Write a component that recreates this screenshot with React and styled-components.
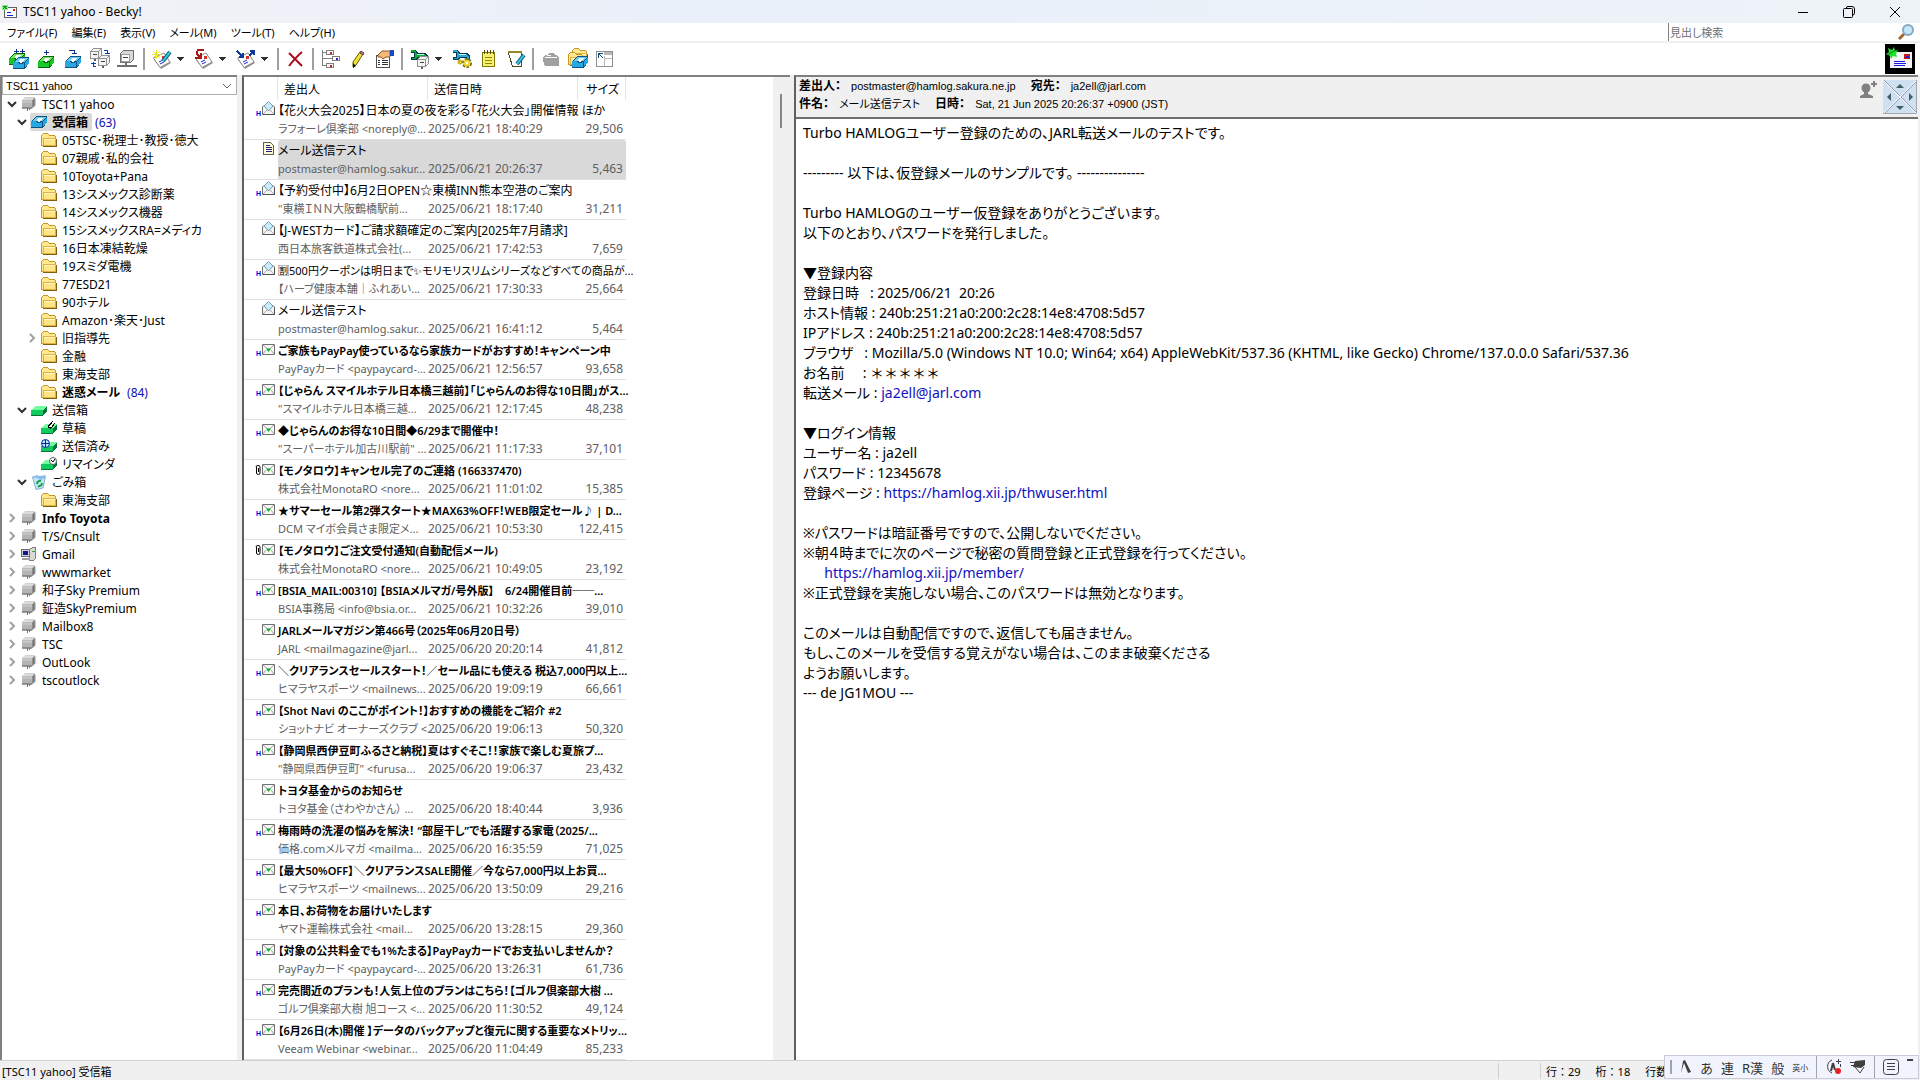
import { useState } from "react"
import styled, { createGlobalStyle } from "styled-components"

const menus = ["ファイル(F)", "編集(E)", "表示(V)", "メール(M)", "ツール(T)", "ヘルプ(H)"]

const folders = [
    { name: "TSC11 yahoo", level: 0, icon: "server", open: true },
    { name: "受信箱", level: 1, icon: "inbox", open: true, count: 63, bold: true, selected: true },
    { name: "05TSC･税理士･教授･徳大", level: 2, icon: "folder" },
    { name: "07親戚･私的会社", level: 2, icon: "folder" },
    { name: "10Toyota+Pana", level: 2, icon: "folder" },
    { name: "13シスメックス診断薬", level: 2, icon: "folder" },
    { name: "14シスメックス機器", level: 2, icon: "folder" },
    { name: "15シスメックスRA=メディカ", level: 2, icon: "folder" },
    { name: "16日本凍結乾燥", level: 2, icon: "folder" },
    { name: "19スミダ電機", level: 2, icon: "folder" },
    { name: "77ESD21", level: 2, icon: "folder" },
    { name: "90ホテル", level: 2, icon: "folder" },
    { name: "Amazon･楽天･Just", level: 2, icon: "folder" },
    { name: "旧指導先", level: 2, icon: "folder", open: false },
    { name: "金融", level: 2, icon: "folder" },
    { name: "東海支部", level: 2, icon: "folder" },
    { name: "迷惑メール", level: 2, icon: "folder", count: 84, bold: true },
    { name: "送信箱", level: 1, icon: "outbox", open: true },
    { name: "草稿", level: 2, icon: "draft" },
    { name: "送信済み", level: 2, icon: "sent" },
    { name: "リマインダ", level: 2, icon: "reminder" },
    { name: "ごみ箱", level: 1, icon: "trash", open: true },
    { name: "東海支部", level: 2, icon: "folder" },
    { name: "Info Toyota", level: 0, icon: "server", open: false, bold: true },
    { name: "T/S/Cnsult", level: 0, icon: "server", open: false },
    { name: "Gmail", level: 0, icon: "computer", open: false },
    { name: "wwwmarket", level: 0, icon: "server", open: false },
    { name: "和子Sky Premium", level: 0, icon: "server", open: false },
    { name: "鉦造SkyPremium", level: 0, icon: "server", open: false },
    { name: "Mailbox8", level: 0, icon: "server", open: false },
    { name: "TSC", level: 0, icon: "server", open: false },
    { name: "OutLook", level: 0, icon: "server", open: false },
    { name: "tscoutlock", level: 0, icon: "server", open: false },
]

// mark: H = html mail, A = attachment
const mails = [
    { subject: "【花火大会2025】日本の夏の夜を彩る「花火大会」開催情報 ほか", from: "ラフォーレ倶楽部 <noreply@...", date: "2025/06/21 18:40:29", size: "29,506", icon: "read", mark: "H" },
    { subject: "メール送信テスト", from: "postmaster@hamlog.sakur...", date: "2025/06/21 20:26:37", size: "5,463", icon: "page" },
    { subject: "【予約受付中】6月2日OPEN☆東横INN熊本空港のご案内", from: "\"東横ＩＮＮ大阪鶴橋駅前...", date: "2025/06/21 18:17:40", size: "31,211", icon: "read", mark: "H" },
    { subject: "【J-WESTカード】ご請求額確定のご案内[2025年7月請求]", from: "西日本旅客鉄道株式会社(...", date: "2025/06/21 17:42:53", size: "7,659", icon: "read" },
    { subject: "🈹500円クーポンは明日まで✨\uFE0Eモリモリスリムシリーズなどすべての商品が...", from: "【ハーブ健康本舗｜ふれあい...", date: "2025/06/21 17:30:33", size: "25,664", icon: "read", mark: "H", long: true },
    { subject: "メール送信テスト", from: "postmaster@hamlog.sakur...", date: "2025/06/21 16:41:12", size: "5,464", icon: "read" },
    { subject: "ご家族もPayPay使っているなら家族カードがおすすめ！キャンペーン中", from: "PayPayカード <paypaycard-...", date: "2025/06/21 12:56:57", size: "93,658", icon: "unread", mark: "H" },
    { subject: "【じゃらん スマイルホテル日本橋三越前】「じゃらんのお得な10日間」がス...", from: "\"スマイルホテル日本橋三越...", date: "2025/06/21 12:17:45", size: "48,238", icon: "unread", mark: "H" },
    { subject: "◆じゃらんのお得な10日間◆6/29まで開催中！", from: "\"スーパーホテル加古川駅前\" ...", date: "2025/06/21 11:17:33", size: "37,101", icon: "unread", mark: "H" },
    { subject: "【モノタロウ】キャンセル完了のご連絡 (166337470)", from: "株式会社MonotaRO <nore...", date: "2025/06/21 11:01:02", size: "15,385", icon: "unread", mark: "A" },
    { subject: "★サマーセール第2弾スタート★MAX63%OFF！WEB限定セール♪ | D...", from: "DCM マイボ会員さま限定メ...", date: "2025/06/21 10:53:30", size: "122,415", icon: "unread", mark: "H" },
    { subject: "【モノタロウ】ご注文受付通知(自動配信メール)", from: "株式会社MonotaRO <nore...", date: "2025/06/21 10:49:05", size: "23,192", icon: "unread", mark: "A" },
    { subject: "[BSIA_MAIL:00310] 【BSIAメルマガ/号外版】　6/24開催目前──...", from: "BSIA事務局 <info@bsia.or...", date: "2025/06/21 10:32:26", size: "39,010", icon: "unread", mark: "H" },
    { subject: "JARLメールマガジン第466号（2025年06月20日号）", from: "JARL <mailmagazine@jarl...", date: "2025/06/20 20:20:14", size: "41,812", icon: "unread" },
    { subject: "＼クリアランスセールスタート！／セール品にも使える 税込7,000円以上...", from: "ヒマラヤスポーツ <mailnews...", date: "2025/06/20 19:09:19", size: "66,661", icon: "unread", mark: "H" },
    { subject: "【Shot Navi のここがポイント！】おすすめの機能をご紹介 #2", from: "ショットナビ オーナーズクラブ <...", date: "2025/06/20 19:06:13", size: "50,320", icon: "unread", mark: "H" },
    { subject: "【静岡県西伊豆町ふるさと納税】夏はすぐそこ！！家族で楽しむ夏旅プ...", from: "\"静岡県西伊豆町\" <furusa...", date: "2025/06/20 19:06:37", size: "23,432", icon: "unread", mark: "H" },
    { subject: "トヨタ基金からのお知らせ", from: "トヨタ基金（さわやかさん） ...", date: "2025/06/20 18:40:44", size: "3,936", icon: "unread" },
    { subject: "梅雨時の洗濯の悩みを解決！ “部屋干し”でも活躍する家電（2025/...", from: "価格.comメルマガ <mailma...", date: "2025/06/20 16:35:59", size: "71,025", icon: "unread", mark: "H" },
    { subject: "【最大50%OFF】＼クリアランスSALE開催／今なら7,000円以上お買...", from: "ヒマラヤスポーツ <mailnews...", date: "2025/06/20 13:50:09", size: "29,216", icon: "unread", mark: "H" },
    { subject: "本日、お荷物をお届けいたします", from: "ヤマト運輸株式会社 <mail...", date: "2025/06/20 13:28:15", size: "29,360", icon: "unread", mark: "H" },
    { subject: "【対象の公共料金でも1%たまる】PayPayカードでお支払いしませんか？", from: "PayPayカード <paypaycard-...", date: "2025/06/20 13:26:31", size: "61,736", icon: "unread", mark: "H" },
    { subject: "完売間近のプランも！人気上位のプランはこちら！【ゴルフ倶楽部大樹 ...", from: "ゴルフ倶楽部大樹 旭コース <...", date: "2025/06/20 11:30:52", size: "49,124", icon: "unread", mark: "H" },
    { subject: "【6月26日(木)開催 】データのバックアップと復元に関する重要なメトリッ...", from: "Veeam Webinar <webinar...", date: "2025/06/20 11:04:49", size: "85,233", icon: "unread", mark: "H" },
]

const Svg = ({ w = 20, h = w, smooth, children }) => (
    <svg width={w} height={h} viewBox={`0 0 ${w} ${h}`} shapeRendering={smooth ? "auto" : "crispEdges"} aria-hidden="true">
        {children}
    </svg>
)

const Tray = ({ x = 0, y = 0, color, light, dark }) => (
    <g transform={`translate(${x} ${y})`}>
        <path d="M0 6L5 1H16V7L12 13H0Z" fill={dark} />
        <path d="M1 6L5 2H15L11 6Z" fill={light} />
        <path d="M5 5L7 3H12L10 5L8 7H7Z" fill="#f4fbff" />
        <path d="M0 6H4L6 8H9L11 6V12H0Z" fill={color} />
        <path d="M12 6L16 2V7L12 11Z" fill={color} />
    </g>
)
const BlueTray = (p) => <Tray color="#28a8e0" light="#68ccf4" dark="#0f5480" {...p} />
const GreenTray = (p) => <Tray color="#18c828" light="#70e858" dark="#0c6018" {...p} />

const Server = ({ x = 0, y = 0, fill = "#f4f4f4" }) => (
    <g transform={`translate(${x} ${y})`}>
        <path d="M.5 3.5L3.5 .5H11.5V7.5L8.5 10.5H.5Z" fill={fill} stroke="#909090" />
        <path d="M.5 3.5H8.5V10.5M8.5 3.5L11.5 .5" stroke="#909090" fill="none" />
        <path d="M3 6.5H7" stroke="#404040" />
        <path d="M4 11H6V13H4Z" fill="#606060" />
    </g>
)

const Sheet = () => (
    <g shapeRendering="auto">
        <path d="M2 11L13 5L19 14L9 20Z" fill="#909090" />
        <path d="M1.500 9L12 4L18 13L8 18.500Z" fill="#fff" stroke="#909090" />
        <path d="M7 13L11 11M8 15L12 13" stroke="#2020e0" />
        <path d="M10 7H13V10H10Z" fill="#e03020" />
    </g>
)

const Folder = ({ x = 0, y = 0 }) => (
    <g transform={`translate(${x} ${y})`}>
        <path d="M.5 12.500V2.500L2.500 .5H6.500L8.500 2.500H13.500L14.500 4V12.500Z" fill="#ffe890" stroke="#c89828" />
        <path d="M2.500 12.500V5.500H14.500V12.500Z" fill="#ffe488" stroke="#e0b040" />
        <path d="M3 6.500H14" stroke="#fff8c8" />
        <path d="M2 13.500H15.500V6" stroke="#806010" fill="none" />
    </g>
)

const Wrench = ({ color }) => (
    <g>
        <path d="M1 1H6L8 4H15L18 7V11H14V9H8L6 11H1V8H4V4H1Z" fill="#083850" />
        <path d="M1 1H5L7 5H14L17 8V10H15V8H7L5 10H2V9H5V3H1Z" fill={color} />
        <path d="M7 5.500H14" stroke="#d0f8ff" />
    </g>
)

const GreenBox = ({ children }) => (
    <Svg w={16} h={14}>
        <path d="M0 7L4 3H16V8L12 13H0Z" fill="#0c7038" />
        <path d="M0 7L4 3H16L12 7Z" fill="#70ff9c" />
        <path d="M0 7H12V12H0Z" fill="#10cc60" />
        {children}
    </Svg>
)

const toolIcons = {
    sendReceive: <Svg w={22}><GreenTray x={1} y={4} /><BlueTray x={5} y={8} /><path d="M8.500 1V5M6 3.500H11M14.500 1V5M12 3.500H17" stroke="#103090" /></Svg>,
    send: <Svg><GreenTray x={2} y={6} /><path d="M10.500 1V6M8 3.500H13" stroke="#103090" /></Svg>,
    receive: <Svg><BlueTray x={2} y={6} /><path d="M6 1.500H11.500V5M9 4.500H14" stroke="#103090" fill="none" /></Svg>,
    sync: <Svg w={22}><Server x={1} y={0} /><Server x={9} y={7} /><path d="M15 2.500H18.500V6M16 5.500H21M7 18.500H4.500V14M2 15.500H7" stroke="#0040b0" fill="none" /></Svg>,
    remote: <Svg><path d="M3.500 4.500L6.500 1.500H16.500V10.500L13.500 13.500H3.500Z" fill="#d8d8d8" stroke="#707070" /><path d="M4.500 5.500H12.500V12.500H4.500Z" fill="#fff" stroke="#a0a0a0" /><path d="M6 8.500H11" stroke="#404040" /><path d="M8 14H10V17H8ZM0 16H20V18H0Z" fill="#707070" /></Svg>,
    compose: <Svg><Sheet /><path d="M11 12L18 3" stroke="#186880" strokeWidth="4" shapeRendering="auto" /><path d="M11 12L18 3" stroke="#30c8e0" strokeWidth="2" shapeRendering="auto" /><path d="M1 2L8 9M8 2L1 9M4.500 1V10M0 5.500H9" stroke="#f0e830" /></Svg>,
    reply: <Svg><Sheet /><path d="M10 1H4L3 3V5L6 8M1 8.500H7V4" stroke="#a81818" strokeWidth="2" fill="none" /></Svg>,
    forward: <Svg><Sheet /><path d="M1 2L7 8M7 4V8H3" stroke="#1038a0" strokeWidth="2" fill="none" /><path d="M13 7L18 2M14 2H18V6" stroke="#1038a0" strokeWidth="2" fill="none" /></Svg>,
    remove: <Svg w={18} smooth><path d="M2 3L15 16M15 2C10 6 6 11 2 16" stroke="#b00818" strokeWidth="2" fill="none" /></Svg>,
    thread: <Svg><path d="M1.500 1V16.500H5M1 3.500H5M1 9.500H11" stroke="#808080" fill="none" /><path d="M5.500 1.500H12.500V5.500H5.500ZM11.500 7.500H18.500V11.500H11.500ZM5.500 14.500H12.500V18.500H5.500Z" fill="#fff" stroke="#808080" /><path d="M9 3H11V5H9Z" fill="#d01818" /><path d="M15 9H17V11H15Z" fill="#2020e0" /><path d="M9 16H11V18H9Z" fill="#d01818" /></Svg>,
    edit: <Svg w={14} h={20} smooth><path d="M9 3L12 5L5 16L2 18V13Z" fill="#f0e438" stroke="#605800" /><path d="M10 2L13 4L12 6L9 4Z" fill="#d07080" stroke="#604040" /><path d="M2 14V19L5 17Z" fill="#101010" /></Svg>,
    property: <Svg><path d="M1.500 6.500H14.500V18.500H1.500Z" fill="#fff" stroke="#505050" /><path d="M3 11.500H5M7 11.500H13M3 13.500H5M7 13.500H13M3 15.500H5M7 15.500H13" stroke="#303030" /><path d="M3 6L7 2H15V8H11L8 10L6 8H3Z" fill="#f4b878" stroke="#905820" shapeRendering="auto" /><path d="M15 1H19V7H15Z" fill="#1848c8" /></Svg>,
    mailboxSetup: <Svg><Wrench color="#10b030" /><Server x={7} y={7} /></Svg>,
    setup: <Svg><Wrench color="#28a8d8" /><g shapeRendering="auto"><circle cx="15" cy="14" r="3" fill="#fff" stroke="#706000" strokeWidth="4" strokeDasharray="2 1" /><circle cx="15" cy="14" r="2.500" fill="#fff" stroke="#e8d020" strokeWidth="2" /><circle cx="8" cy="13" r="1.500" fill="#fff" stroke="#c8b010" strokeWidth="2" /></g></Svg>,
    memo: <Svg w={16} h={20}><path d="M1.500 3.500H13.500V17.500H1.500Z" fill="#f8f070" stroke="#807808" /><path d="M4 8.500H11M4 11.500H11M4 14.500H11" stroke="#908800" /><path d="M3.500 1V5M6.500 1V5M9.500 1V5M12.500 1V5" stroke="#505008" /></Svg>,
    note: <Svg><path d="M2.500 3.500H15.500V17.500H6.500L2.500 4" fill="#fff" stroke="#484818" /><path d="M2 2H16V4H2Z" fill="#908828" /><path d="M18 6L11 15" stroke="#186080" strokeWidth="4" shapeRendering="auto" /><path d="M18 6L11 15" stroke="#38c8e8" strokeWidth="2" shapeRendering="auto" /></Svg>,
    openFolder: <Svg w={18}><path d="M1 8L3 5H5L7 3H11L13 5H15L17 8V15L16 16H3L1 10Z" fill="#a0a0a0" /><path d="M3 7.500H15M5 5.500H9" stroke="#fff" /></Svg>,
    folders: <Svg w={22}><Folder x={5} y={0} /><Folder x={1} y={4} /><BlueTray x={5} y={7} /></Svg>,
    layout: <Svg><path d="M1.500 2.500H17.500V17.500H1.500Z" fill="#fff" stroke="#909090" /><path d="M9 3H17V6H9ZM9 7H10V17H9ZM10 9H17V10H10Z" fill="#b8b8b8" /><path d="M3.500 4V9M3 4.500H8M4 5L8 9" stroke="#104880" fill="none" /></Svg>,
}

const treeIcons = {
    server: <Svg w={16} smooth><path d="M1 4.500L4 1.500H13.500L14.500 3V9.500L11 12.500H1Z" fill="#909090" /><path d="M1 4.500L4 1.500H13.500L11 4.500Z" fill="#dcdcdc" /><path d="M1 4.500H11V11.500H1Z" fill="#b4b4b4" /><path d="M1 4.500H11V7H1Z" fill="#c4c4c4" /><path d="M12.500 4V10" stroke="#707070" /><path d="M1 12H11" stroke="#707070" /><path d="M6.500 12V15M8.500 12V14" stroke="#707070" /></Svg>,
    computer: <Svg w={16}><path d="M8.500 3.500L11.500 1.500H14.500V12.500L12.500 14.500H8.500Z" fill="#d8d8d8" stroke="#808080" /><path d="M.5 3.500H8.500V10.500H.5Z" fill="#d0d0d0" stroke="#707070" /><path d="M2 5H7V9H2Z" fill="#101890" /><path d="M11 5H14V6H11Z" fill="#40a040" /><path d="M1 12H9V14H1Z" fill="#a0a0a0" /></Svg>,
    inbox: <Svg w={16} h={14}><BlueTray /></Svg>,
    outbox: <GreenBox />,
    draft: <GreenBox><path d="M8 7L13 1" stroke="#000" strokeWidth="4" /><path d="M9 6L13 1" stroke="#fff" strokeWidth="2" /></GreenBox>,
    sent: <GreenBox><g shapeRendering="auto"><circle cx="4.500" cy="4.500" r="4" fill="#b8ecff" stroke="#1020a0" /><path d="M1 4.500H8M4.500 1V8" stroke="#1020a0" /></g></GreenBox>,
    reminder: <GreenBox><g shapeRendering="auto"><circle cx="12" cy="4" r="3.500" fill="#fff" stroke="#606060" /><path d="M10 3L12 5L14 2" stroke="#000" fill="none" /></g></GreenBox>,
    trash: <Svg w={16} smooth><path d="M1.500 3L14.500 2L12 14L5 15.500Z" fill="#c4e4f8" stroke="#80b0d0" /><path d="M1 3L6 1L10 3L14 1V4L10 6L6 4Z" fill="#88c0ec" /><path d="M6 10A3 3 0 0 1 10 7M11 9A3 3 0 0 1 7 12" stroke="#18a040" strokeWidth="2" fill="none" /></Svg>,
    folder: <Svg w={16} h={14}><Folder /></Svg>,
}

const mailIcons = {
    read: <Svg w={13} h={15} smooth><path d="M.5 6L2 4.500H11L12.500 6V13.500H.5Z" fill="#f4f4f4" stroke="#707070" /><path d="M2 5L6.500 .5L11 5L6.500 10Z" fill="#c8ecff" stroke="#7898a8" /><path d="M1 13L5 9M12 13L8 9" stroke="#b0b0b0" /><path d="M1 13.500H12.500V7" fill="none" stroke="#505050" /></Svg>,
    unread: <Svg w={13} h={12} smooth><path d="M.5 .5H12.500V10.500H.5Z" fill="#f8f8f8" stroke="#707070" /><path d="M1 1L6.500 6L12 1M1 10L4 6M12 10L9 6" stroke="#a0a0a0" fill="none" /><path d="M4 4.500H9L6.500 8Z" fill="#10a820" /></Svg>,
    page: <Svg w={13} h={14}><path d="M1.500 .5H8.500L11.500 3.500V12.500H1.500Z" fill="#fffbd0" stroke="#606060" /><path d="M4 3.500H8M4 5.500H10M4 7.500H10M4 9.500H10" stroke="#202080" /></Svg>,
}

const Chevron = ({ open }) => (
    <Svg w={10} smooth>
        {open ? <path d="M1 3L5 7L9 3" fill="none" stroke="#303030" strokeWidth="2" /> : <path d="M3 1L7 5L3 9" fill="none" stroke="#a0a0a0" strokeWidth="2" />}
    </Svg>
)

const Tool = ({ icon, label, menu }) => (
    <ToolButton $menu={menu} title={label} aria-label={label}>
        <IconBox>{toolIcons[icon]}</IconBox>
        {menu && <Svg w={8} h={5}><path d="M0 0H8L4 4Z" fill="#303030" /></Svg>}
    </ToolButton>
)

const Mail = ({ mail, selected, onSelect }) => (
    <tbody onClick={onSelect}>
        <tr>
            <MarkCell rowSpan={2}>
                <Marks>
                    {mail.mark === "H" && <HtmlMark>H</HtmlMark>}
                    {mail.mark === "A" && <Svg w={6} h={12} smooth><path d="M3.500 4V8M1.500 3V9Q1.500 10.500 3.500 10.500Q5 10.500 5 9V3Q5 1.500 3 1.500Q1 1.500 1 3" fill="none" stroke="#000" /></Svg>}
                    {mailIcons[mail.icon]}
                </Marks>
            </MarkCell>
            <Subject colSpan={3} $unread={mail.icon === "unread"} $small={mail.icon === "unread" || mail.long} $selected={selected}>{mail.subject}</Subject>
        </tr>
        <tr>
            <Detail $selected={selected} $small>{mail.from}</Detail>
            <Detail $selected={selected}>{mail.date}</Detail>
            <Detail $selected={selected} $right>{mail.size}</Detail>
        </tr>
    </tbody>
)

const App = () => {
    const [current, setCurrent] = useState(1)
    const [keyword, setKeyword] = useState("")

    return (
        <Window>
            <GlobalStyle />
            <TitleBar>
                <Svg w={16}><path d="M2.500 3.500H14.500V13.500H2.500Z" fill="#fff" stroke="#606060" /><path d="M5 8.500H9M5 11.500H11" stroke="#2020e0" /><path d="M11 5H13V7H11Z" fill="#e02020" /><path d="M0 1H6V6H0Z" fill="#80f080" /><path d="M1 2L5 5M5 2L1 5" stroke="#109020" /></Svg>
                <h1>TSC11 yahoo - Becky!</h1>
                <WindowButton aria-label="最小化"><Svg w={10}><path d="M0 5.500H10" stroke="#000" /></Svg></WindowButton>
                <WindowButton aria-label="元に戻す"><Svg w={12} smooth><path d="M3.500 2.500V2Q3.500 .5 5 .5H9Q11.500 .5 11.500 3V7Q11.500 9 9.500 9" fill="none" stroke="#000" /><rect x=".5" y="2.500" width="9" height="9" rx="1" fill="none" stroke="#000" /></Svg></WindowButton>
                <WindowButton aria-label="閉じる"><Svg w={12} smooth><path d="M1 1L11 11M11 1L1 11" stroke="#000" /></Svg></WindowButton>
            </TitleBar>
            <MenuBar>
                {menus.map((el) => <MenuButton key={el}>{el}</MenuButton>)}
                <Search>
                    <input type="text" aria-label="見出し検索" placeholder="見出し検索" value={keyword} onChange={(e) => setKeyword(e.target.value)} />
                    <Svg w={16} smooth><path d="M6 10L1 15" stroke="#a06830" strokeWidth="3" /><circle cx="10" cy="6" r="5" fill="#c4e8fa" stroke="#88a8c0" strokeWidth="2" /></Svg>
                </Search>
            </MenuBar>
            <Toolbar>
                <Tool icon="sendReceive" label="送受信" />
                <Tool icon="send" label="送信" />
                <Tool icon="receive" label="受信" />
                <Tool icon="sync" label="全メールボックス巡回" />
                <Tool icon="remote" label="リモートメールボックス" />
                <Divider />
                <Tool icon="compose" label="新規作成" menu />
                <Tool icon="reply" label="返信" menu />
                <Tool icon="forward" label="転送" menu />
                <Divider />
                <Tool icon="remove" label="削除" />
                <Divider />
                <Tool icon="thread" label="スレッド表示" />
                <Tool icon="edit" label="編集" />
                <Tool icon="property" label="プロパティ" />
                <Divider />
                <Tool icon="mailboxSetup" label="メールボックスの設定" menu />
                <Tool icon="setup" label="全般的な設定" />
                <Tool icon="memo" label="アドレス帳" />
                <Tool icon="note" label="メモ" />
                <Divider />
                <Tool icon="openFolder" label="フォルダを開く" />
                <Tool icon="folders" label="フォルダ一覧" />
                <Tool icon="layout" label="レイアウト" />
                <Logo>
                    <Svg w={30}>
                        <rect width="30" height="30" fill="#000" />
                        <path d="M5 8H27V24H5Z" fill="#f4f4f4" /><path d="M9 17.500H20M9 19.500H21M9 21.500H20" stroke="#1818e0" />
                        <path d="M19 10H25V15H19Z" fill="#d01818" /><path d="M20 14H24V12H21Z" fill="#2020c0" />
                        <g shapeRendering="auto">
                            <path d="M1 10L4 8L3 4L7 6L9 3L10 7L13 6L11 10L12 13L8 12L6 15L5 12Z" fill="#20e030" />
                            <path d="M2 11L11 6" stroke="#108018" />
                        </g>
                    </Svg>
                </Logo>
            </Toolbar>
            <Panes>
                <Sidebar>
                    <Combo>
                        <select aria-label="メールボックス" defaultValue="TSC11 yahoo">
                            <option>TSC11 yahoo</option>
                        </select>
                        <Svg w={10} smooth><path d="M1 3L5 7L9 3" fill="none" stroke="#606060" /></Svg>
                    </Combo>
                    <Tree role="tree">
                        {folders.map((el, i) => (
                            <TreeRow key={i} role="treeitem" $level={el.level}>
                                <Toggle>{el.open !== undefined && <Chevron open={el.open} />}</Toggle>
                                <TreeLabel $bold={el.bold} $selected={el.selected}>
                                    {treeIcons[el.icon]}
                                    <span>{el.name}</span>
                                </TreeLabel>
                                {el.count && <Count>({el.count})</Count>}
                            </TreeRow>
                        ))}
                    </Tree>
                </Sidebar>
                <MailPane>
                    <MailScroll>
                        <MailTable>
                            <colgroup><MarkCol /><WideCol /><WideCol /><SizeCol /></colgroup>
                            <thead>
                                <tr><HeadCell /><HeadCell>差出人</HeadCell><HeadCell>送信日時</HeadCell><HeadCell $right>サイズ</HeadCell></tr>
                            </thead>
                            {mails.map((el, i) => <Mail key={i} mail={el} selected={i === current} onSelect={() => setCurrent(i)} />)}
                        </MailTable>
                    </MailScroll>
                    <ScrollTrack><Thumb /></ScrollTrack>
                </MailPane>
                <Reader>
                    <ReaderHead>
                        <Fields>
                            <div><b>差出人：</b><span>postmaster@hamlog.sakura.ne.jp</span><b>宛先：</b><span>ja2ell@jarl.com</span></div>
                            <div><b>件名：</b><span>メール送信テスト</span><b>日時：</b><span>Sat, 21 Jun 2025 20:26:37 +0900 (JST)</span></div>
                        </Fields>
                        <Svg w={17} h={20} smooth><circle cx="6" cy="8" r="4.500" fill="#808080" /><path d="M4 11H8V14L13 16V18H0V16L4 14Z" fill="#808080" /><path d="M14 1V7M11 4H17" stroke="#808080" strokeWidth="2" /></Svg>
                        <Svg w={34} smooth>
                            <rect width="34" height="34" fill="#cfe0f2" />
                            <path d="M1 0L34 33M34 1L1 34" stroke="#909ca8" /><path d="M0 0L34 34M34 0L0 34" stroke="#fff" />
                            <path d="M0 33.500H33.500V0" fill="none" stroke="#a0a8b0" />
                            <path d="M13 8L17 4L21 8ZM13 26H21L17 30ZM8 13V21L4 17ZM26 13V21L30 17Z" fill="#406068" />
                        </Svg>
                    </ReaderHead>
                    <Body>
                        Turbo HAMLOGユーザー登録のための、JARL転送メールのテストです。{"\n\n"}
                        --------- 以下は、仮登録メールのサンプルです。 ---------------{"\n\n"}
                        Turbo HAMLOGのユーザー仮登録をありがとうございます。{"\n"}
                        以下のとおり、パスワードを発行しました。{"\n\n"}
                        ▼登録内容{"\n"}
                        登録日時   : 2025/06/21  20:26{"\n"}
                        ホスト情報 : 240b:251:21a0:200:2c28:14e8:4708:5d57{"\n"}
                        IPアドレス : 240b:251:21a0:200:2c28:14e8:4708:5d57{"\n"}
                        ブラウザ   : Mozilla/5.0 (Windows NT 10.0; Win64; x64) AppleWebKit/537.36 (KHTML, like Gecko) Chrome/137.0.0.0 Safari/537.36{"\n"}
                        お名前     : <FullWidth>＊＊＊＊＊</FullWidth>{"\n"}
                        転送メール : <a href="mailto:ja2ell@jarl.com">ja2ell@jarl.com</a>{"\n\n"}
                        ▼ログイン情報{"\n"}
                        ユーザー名 : ja2ell{"\n"}
                        パスワード : 12345678{"\n"}
                        登録ページ : <a href="https://hamlog.xii.jp/thwuser.html">https://hamlog.xii.jp/thwuser.html</a>{"\n\n"}
                        ※パスワードは暗証番号ですので、公開しないでください。{"\n"}
                        ※朝４時までに次のページで秘密の質問登録と正式登録を行ってください。{"\n"}
                        {"　  "}<a href="https://hamlog.xii.jp/member/">https://hamlog.xii.jp/member/</a>{"\n"}
                        ※正式登録を実施しない場合、このパスワードは無効となります。{"\n\n"}
                        このメールは自動配信ですので、返信しても届きません。{"\n"}
                        もし、このメールを受信する覚えがない場合は、このまま破棄くださる{"\n"}
                        ようお願いします。{"\n"}
                        --- de JG1MOU ---
                    </Body>
                </Reader>
            </Panes>
            <StatusBar>
                <StatusText>[TSC11 yahoo] 受信箱</StatusText>
                <StatusGap />
                <StatusPos><FullWidth>行：29</FullWidth><FullWidth>桁：18</FullWidth><FullWidth>行数</FullWidth></StatusPos>
            </StatusBar>
            <ImeBar>
                <ImeGrip />
                <Svg w={12} h={16} smooth><path d="M1 14L3 2L5 1L11 13L8 14L4 4Z" fill="#404040" /></Svg>
                <span>あ</span><span>連</span><span>R漢</span><span>般</span><small>英小</small>
                <ImeLine />
                <Svg w={16} smooth><path d="M6 1A7 7 0 0 0 6 14" fill="none" stroke="#404040" /><path d="M7 4L5 12M7 4L9 11" fill="none" stroke="#404040" strokeWidth="2" /><path d="M12.500 0V5M10 2.500H15M14.500 5V8" stroke="#404040" /><circle cx="12" cy="12" r="3" fill="#e82020" /></Svg>
                <Svg w={16} smooth><path d="M0 3.500H5M1 6.500H5" stroke="#404040" /><path d="M5 2L15 1V6L11 9L3 8Z" fill="#404040" /><path d="M5 8L10 14L14 8" fill="none" stroke="#404040" /></Svg>
                <ImeLine />
                <Svg w={16} smooth><rect x=".5" y=".5" width="15" height="15" rx="3" fill="none" stroke="#404040" /><path d="M4 4.500H12M4 7.500H12M4 10.500H12" stroke="#404040" /></Svg>
                <ImeMin />
            </ImeBar>
        </Window>
    )
}
export default App

const GlobalStyle = createGlobalStyle`
    * {
        box-sizing: border-box;
    }
    body {
        margin: 0;
        background-color: #f0f0f0;
        color: #000;
        font-family: "Noto Sans", "Noto Sans CJK JP", sans-serif;
        font-size: 12px;
        font-feature-settings: "palt";
    }
    button, input, select {
        font: inherit;
        font-feature-settings: inherit;
        color: inherit;
        border: none;
        background: none;
        padding: 0;
        margin: 0;
    }
    svg {
        display: block;
        flex-shrink: 0;
    }
`
const Window = styled.div`
    display: flex;
    flex-direction: column;
    height: 100vh;
    overflow: hidden;
`
const TitleBar = styled.header`
    display: flex;
    align-items: center;
    height: 23px;
    padding: 0 2px;
    background: linear-gradient(90deg, #f2f2f6, #e9f0fa 40%, #eef3f8);
    h1 {
        flex: 1;
        margin: 0 0 0 5px;
        font-size: 12px;
        font-weight: normal;
    }
`
const WindowButton = styled.button`
    display: flex;
    justify-content: center;
    align-items: center;
    width: 46px;
    height: 20px;
`
const MenuBar = styled.nav`
    display: flex;
    align-items: center;
    gap: 14px;
    height: 20px;
    padding: 0 2px 0 7px;
    background-color: #fff;
    border-bottom: 2px solid #f0f0f0;
`
const MenuButton = styled.button`
    padding-top: 2px;
    font-size: 11px;
    line-height: 16px;
    white-space: nowrap;
`
const Search = styled.label`
    display: flex;
    align-items: center;
    width: 250px;
    height: 18px;
    margin-left: auto;
    padding-right: 4px;
    border-left: 1px solid #808080;
    input {
        flex: 1;
        min-width: 0;
        padding-left: 1px;
        outline: none;
        font-size: 11px;
    }
    input::placeholder {
        color: #707070;
    }
`
const Toolbar = styled.div`
    display: flex;
    align-items: center;
    height: 32px;
    padding: 0 5px;
    background-color: #fff;
`
const ToolButton = styled.button`
    display: flex;
    align-items: center;
    flex-shrink: 0;
    width: ${(props) => (props.$menu ? "42px" : "27px")};
    height: 28px;
`
const IconBox = styled.span`
    display: flex;
    justify-content: center;
    width: 28px;
`
const Divider = styled.span`
    width: 2px;
    height: 22px;
    margin: 0 3px;
    background-color: #a0a0a0;
`
const Logo = styled.span`
    margin-left: auto;
`
const Panes = styled.main`
    display: flex;
    flex: 1;
    min-height: 0;
    padding-right: 2px;
`
const Sidebar = styled.aside`
    display: flex;
    flex-direction: column;
    width: 237px;
    flex-shrink: 0;
    margin-right: 5px;
    background-color: #fff;
    border-top: 2px solid #808080;
    border-left: 2px solid #808080;
`
const Combo = styled.div`
    display: flex;
    align-items: center;
    height: 18px;
    padding-right: 4px;
    border: 1px solid #b0b0b0;
    border-top: none;
    select {
        flex: 1;
        padding-left: 3px;
        appearance: none;
        outline: none;
        font-family: "Liberation Sans", sans-serif;
        font-size: 11px;
    }
`
const Tree = styled.ul`
    margin: 0;
    padding: 0;
    list-style: none;
`
const TreeRow = styled.li`
    display: flex;
    align-items: center;
    height: 18px;
    padding-left: ${(props) => 5 + props.$level * 10}px;
`
const Toggle = styled.span`
    width: 13px;
`
const TreeLabel = styled.span`
    display: flex;
    align-items: center;
    gap: 5px;
    height: 18px;
    padding: 0 4px 0 1px;
    border-radius: 2px;
    white-space: nowrap;
    font-weight: ${(props) => (props.$bold ? "bold" : "normal")};
    background-color: ${(props) => (props.$selected ? "#d9d9d9" : "transparent")};
`
const Count = styled.span`
    margin-left: 3px;
    color: #1010b0;
`
const MailPane = styled.section`
    display: flex;
    width: 548px;
    flex-shrink: 0;
    margin-right: 4px;
    background-color: #fff;
    border-top: 2px solid #808080;
    border-left: 2px solid #606060;
`
const MailScroll = styled.div`
    flex: 1;
    min-width: 0;
    overflow: hidden;
`
const ScrollTrack = styled.div`
    width: 17px;
    padding: 17px 7px;
    background-color: #f0f0f0;
`
const Thumb = styled.div`
    width: 2px;
    height: 34px;
    background-color: #868686;
`
const MailTable = styled.table`
    table-layout: fixed;
    width: 382px;
    border-spacing: 0;
    white-space: nowrap;
    td, th {
        padding: 0;
    }
`
const MarkCol = styled.col`
    width: 34px;
`
const WideCol = styled.col`
    width: 150px;
`
const SizeCol = styled.col`
    width: 48px;
`
const HeadCell = styled.th`
    && {
        height: 23px;
        padding: 0 6px;
    }
    border-right: 1px solid #e5e5e5;
    font-weight: normal;
    text-align: ${(props) => (props.$right ? "right" : "left")};
`
const MarkCell = styled.td`
    height: 40px;
    vertical-align: top;
    border-bottom: 1px solid #e0e0e0;
`
const Marks = styled.div`
    display: flex;
    justify-content: flex-end;
    align-items: flex-end;
    height: 16px;
    gap: 1px;
    padding-right: 3px;
`
const HtmlMark = styled.span`
    color: #0000d0;
    font: bold 7px/5px "Liberation Sans", sans-serif;
`
const Subject = styled.td`
    height: 20px;
    line-height: 20px;
    && {
        padding-top: 1px;
    }
    border-radius: 3px 3px 0 0;
    font-size: ${(props) => (props.$small ? "11px" : "12px")};
    font-weight: ${(props) => (props.$unread ? 600 : 400)};
    background-color: ${(props) => (props.$selected ? "#d9d9d9" : "transparent")};
`
const Detail = styled.td`
    height: 19px;
    line-height: 16px;
    vertical-align: top;
    border-bottom: 1px solid #e0e0e0;
    color: #606060;
    font-size: ${(props) => (props.$small ? "11px" : "12px")};
    text-align: ${(props) => (props.$right ? "right" : "left")};
    background-color: ${(props) => (props.$selected ? "#d9d9d9" : "transparent")};
    &&:last-child {
        padding-right: 3px;
    }
`
const Reader = styled.section`
    display: flex;
    flex-direction: column;
    flex: 1;
    min-width: 0;
    background-color: #fff;
    border-top: 2px solid #808080;
    border-left: 2px solid #606060;
`
const ReaderHead = styled.div`
    display: flex;
    align-items: flex-start;
    gap: 6px;
    height: 42px;
    padding: 3px 1px 0 3px;
    background-color: #f0f0f0;
    border-bottom: 2px solid #707070;
`
const Fields = styled.div`
    flex: 1;
    margin-top: -3px;
    font-family: "Liberation Sans", "Noto Sans CJK JP", sans-serif;
    line-height: 18px;
    span {
        margin: 0 15px 0 10px;
        font-size: 11px;
    }
`
const Body = styled.pre`
    flex: 1;
    margin: 0;
    padding: 4px 7px;
    font-family: "Noto Sans", "Noto Sans CJK JP", sans-serif;
    font-size: 14px;
    line-height: 20px;
    white-space: pre-wrap;
    a {
        color: #1010c0;
        text-decoration: none;
    }
`
const FullWidth = styled.span`
    font-feature-settings: normal;
`
const StatusBar = styled.footer`
    display: flex;
    align-items: center;
    height: 20px;
    border-top: 1px solid #d0d0d0;
    background-color: #f0f0f0;
`
const StatusText = styled.span`
    flex: 1;
    padding-left: 2px;
    font-size: 11px;
`
const StatusGap = styled.span`
    width: 43px;
    height: 16px;
    border-left: 1px solid #d0d0d0;
    border-right: 1px solid #d0d0d0;
`
const StatusPos = styled.span`
    display: flex;
    gap: 15px;
    width: 379px;
    padding-left: 5px;
    font-size: 11px;
`
const ImeBar = styled.div`
    position: fixed;
    right: 1px;
    bottom: 1px;
    display: flex;
    align-items: center;
    justify-content: space-between;
    width: 255px;
    height: 24px;
    padding: 0 5px;
    border: 1px solid #c8ccd8;
    background-color: #f1f4fc;
    color: #303030;
    font-size: 13px;
    white-space: nowrap;
    small {
        font-size: 8px;
    }
`
const ImeGrip = styled.span`
    width: 2px;
    height: 14px;
    background-color: #a0a4ac;
`
const ImeLine = styled.span`
    width: 1px;
    height: 22px;
    background-color: #a0a4ac;
`
const ImeMin = styled.span`
    width: 6px;
    height: 2px;
    margin-bottom: 14px;
    background-color: #404040;
`
